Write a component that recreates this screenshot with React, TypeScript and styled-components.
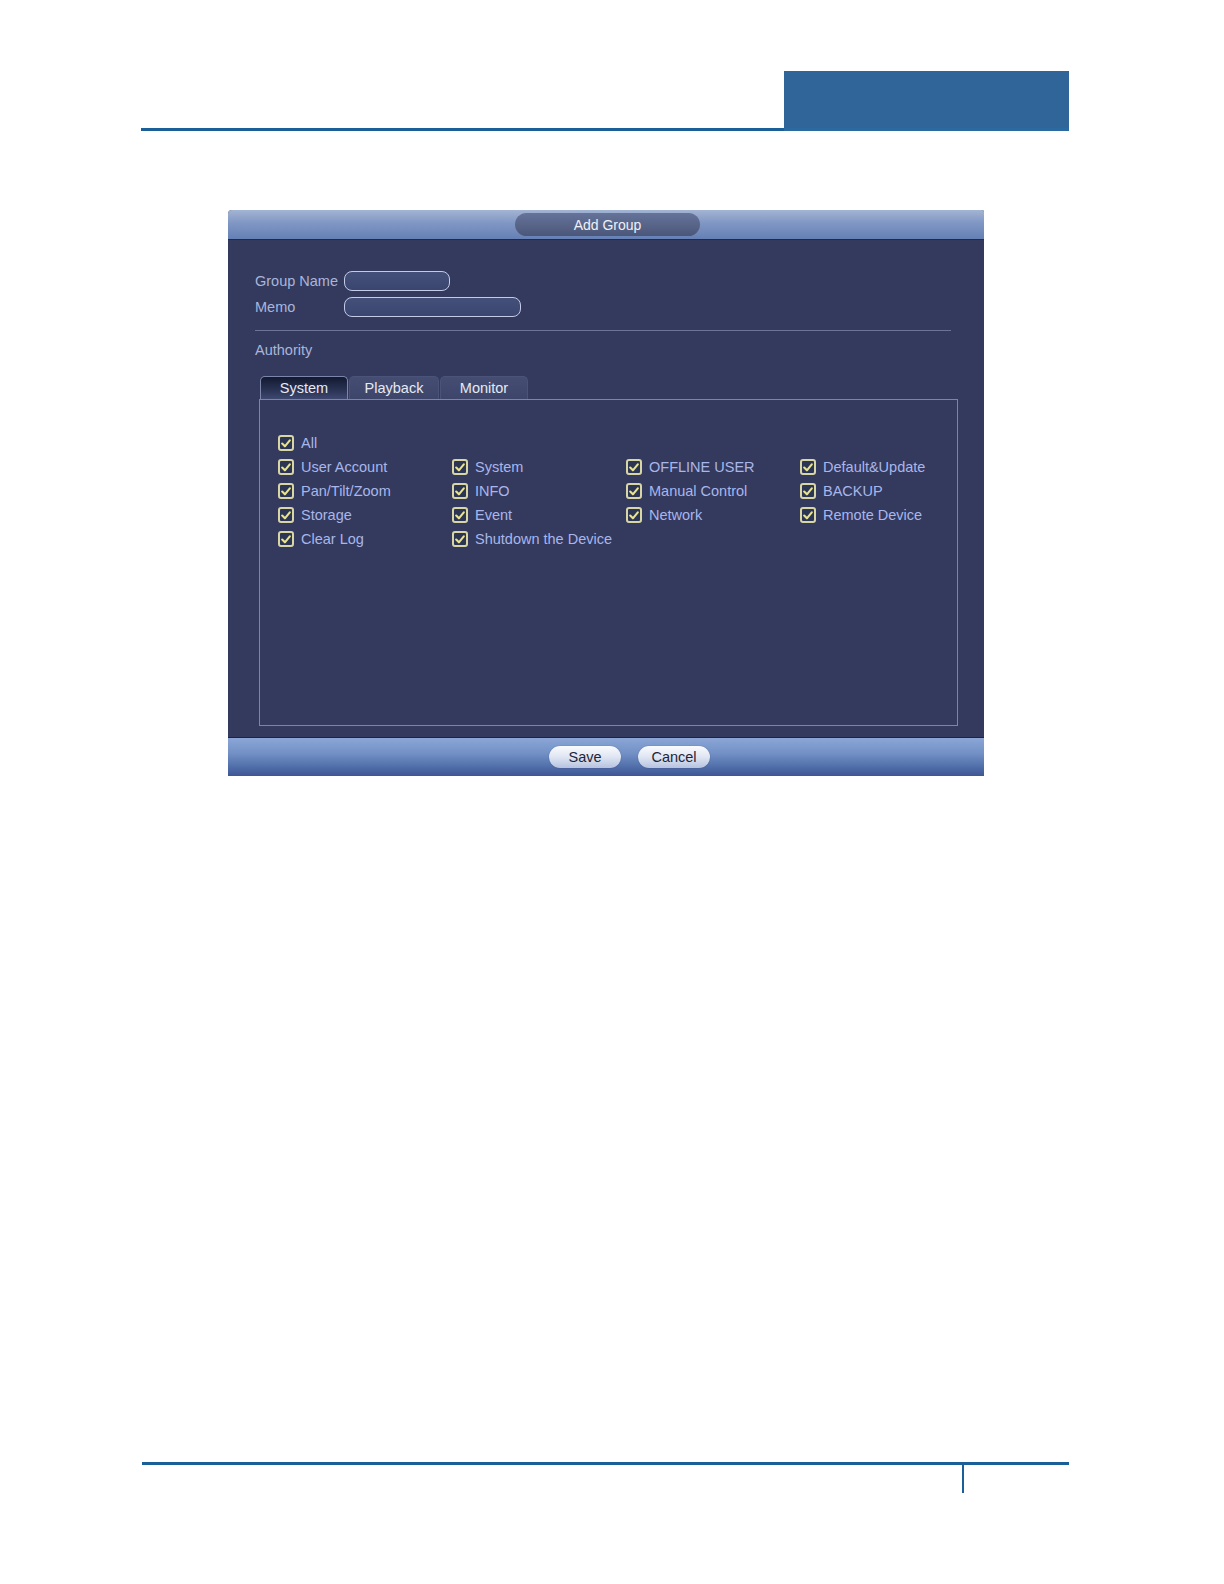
import styled, { createGlobalStyle } from "styled-components";

const GlobalStyle = createGlobalStyle`
  html, body {
    margin: 0;
    padding: 0;
    background: #ffffff;
    overflow: hidden;
  }
  body {
    font-family: "Liberation Sans", Arial, sans-serif;
  }
`;

const Page = styled.div`
  height: 1584px;
  display: flex;
  flex-direction: column;
  box-sizing: border-box;
  padding-top: 71px;
  padding-bottom: 91px;
`;

const Header = styled.div`
  margin-left: 141px;
  width: 928px;
  display: flex;
  align-items: flex-end;
`;

const HeaderLine = styled.div`
  flex: 1;
  height: 3px;
  background: #1a5f98;
`;

const HeaderBlock = styled.div`
  width: 285px;
  height: 60px;
  background: #30659a;
  border-bottom: 3px solid #2a6aa0;
  box-sizing: border-box;
`;

const Dialog = styled.div`
  margin-top: 79px;
  margin-left: 228px;
  width: 756px;
  height: 566px;
  display: flex;
  flex-direction: column;
  background: #343a5d;
  border-radius: 4px 2px 0 0;
  overflow: hidden;
`;

const TitleBar = styled.div`
  height: 30px;
  display: flex;
  justify-content: center;
  align-items: flex-start;
  padding-top: 3px;
  box-sizing: border-box;
  background: linear-gradient(#a3b4d3, #8097c4 45%, #6580b5);
  border-bottom: 1px solid #222a48;
`;

const TitlePill = styled.div`
  width: 185px;
  height: 23px;
  border-radius: 12px;
  background: linear-gradient(#66739a, #4b5779);
  color: #eef0f6;
  font-size: 14px;
  display: flex;
  align-items: center;
  justify-content: center;
  margin-left: 3px;
`;

const Body = styled.div`
  flex: 1;
  display: flex;
  flex-direction: column;
  padding: 31px 26px 10px 27px;
`;

const FieldRow = styled.div`
  display: flex;
  align-items: center;
  height: 20px;
  & + & {
    margin-top: 6px;
  }
`;

const FieldLabel = styled.div`
  width: 89px;
  color: #a9b5dc;
  font-size: 14.5px;
`;

const TextInput = styled.div<{ $width: number }>`
  width: ${(p) => p.$width}px;
  height: 20px;
  box-sizing: border-box;
  border: 1px solid #c3cbe6;
  border-radius: 8px;
  background: linear-gradient(#44507a, #3a4670);
`;

const Separator = styled.div`
  margin-top: 13px;
  margin-right: 7px;
  height: 1px;
  background: #6b7399;
`;

const SectionLabel = styled.div`
  margin-top: 11px;
  color: #a9b5dc;
  font-size: 14.5px;
  line-height: 16px;
`;

const Tabs = styled.div`
  margin-top: 18px;
  margin-left: 5px;
  display: flex;
  gap: 1px;
  height: 23px;
`;

const Tab = styled.div<{ $active?: boolean; $width: number }>`
  width: ${(p) => p.$width}px;
  box-sizing: border-box;
  display: flex;
  align-items: center;
  justify-content: center;
  font-size: 14.5px;
  color: #e6e9f4;
  border-radius: 5px 5px 0 0;
  border: 1px solid ${(p) => (p.$active ? "#7c86aa" : "#4b5478")};
  border-bottom: none;
  background: ${(p) =>
    p.$active
      ? "linear-gradient(#121a30, #2a3354 60%, #3e4870)"
      : "linear-gradient(#454e72, #3d466a)"};
`;

const Panel = styled.div`
  margin-left: 4px;
  height: 327px;
  box-sizing: border-box;
  border: 1px solid #7c84a8;
  padding: 31px 0 0 18px;
  overflow: hidden;
`;

const Grid = styled.div`
  display: grid;
  grid-template-columns: repeat(4, 174px);
  grid-auto-rows: 24px;
`;

const Item = styled.div<{ $full?: boolean }>`
  display: flex;
  align-items: center;
  gap: 7px;
  grid-column: ${(p) => (p.$full ? "1 / -1" : "auto")};
  color: #a8b6ec;
  font-size: 14.5px;
  white-space: nowrap;
`;

const Box = styled.span`
  width: 16px;
  height: 16px;
  flex: none;
  box-sizing: border-box;
  border: 2px solid #d8d5a6;
  border-radius: 3px;
  background: #2c3554;
  display: flex;
  align-items: center;
  justify-content: center;
`;

const Footer = styled.div`
  height: 39px;
  box-sizing: border-box;
  border-top: 1px solid #1d2442;
  background: linear-gradient(#8ba6d6, #7391c6 40%, #4d6aa6 80%, #3e5794);
  display: flex;
  align-items: center;
  gap: 17px;
  padding-left: 321px;
  padding-bottom: 1px;
`;

const Button = styled.div`
  width: 72px;
  height: 22px;
  border-radius: 11px;
  background: linear-gradient(#fafbfe, #dfe5f3 50%, #b6c3e0);
  color: #1e2539;
  font-size: 14.5px;
  display: flex;
  align-items: center;
  justify-content: center;
  box-shadow: 0 0 1px rgba(20, 30, 60, 0.6);
`;

const Spacer = styled.div`
  flex: 1;
`;

const Bottom = styled.div`
  margin-left: 142px;
  width: 927px;
`;

const BottomLine = styled.div`
  height: 3px;
  background: #1a5f98;
`;

const BottomTick = styled.div`
  margin-left: 820px;
  width: 2px;
  height: 28px;
  background: #1a5f98;
`;

function Check() {
  return (
    <Box>
      <svg width="10" height="9" viewBox="0 0 10 9">
        <path
          d="M1.2 4.6 L3.9 7.3 L8.8 1.4"
          fill="none"
          stroke="#e8e48e"
          strokeWidth="2.1"
          strokeLinecap="round"
          strokeLinejoin="round"
        />
      </svg>
    </Box>
  );
}

const items = [
  "User Account",
  "System",
  "OFFLINE USER",
  "Default&Update",
  "Pan/Tilt/Zoom",
  "INFO",
  "Manual Control",
  "BACKUP",
  "Storage",
  "Event",
  "Network",
  "Remote Device",
  "Clear Log",
  "Shutdown the Device",
];

export default function App() {
  return (
    <>
      <GlobalStyle />
      <Page>
        <Header>
          <HeaderLine />
          <HeaderBlock />
        </Header>
        <Dialog>
          <TitleBar>
            <TitlePill>Add Group</TitlePill>
          </TitleBar>
          <Body>
            <FieldRow>
              <FieldLabel>Group Name</FieldLabel>
              <TextInput $width={106} />
            </FieldRow>
            <FieldRow>
              <FieldLabel>Memo</FieldLabel>
              <TextInput $width={177} />
            </FieldRow>
            <Separator />
            <SectionLabel>Authority</SectionLabel>
            <Tabs>
              <Tab $active $width={88}>
                System
              </Tab>
              <Tab $width={90}>Playback</Tab>
              <Tab $width={88}>Monitor</Tab>
            </Tabs>
            <Panel>
              <Grid>
                <Item $full>
                  <Check />
                  All
                </Item>
                {items.map((name) => (
                  <Item key={name}>
                    <Check />
                    {name}
                  </Item>
                ))}
              </Grid>
            </Panel>
          </Body>
          <Footer>
            <Button>Save</Button>
            <Button>Cancel</Button>
          </Footer>
        </Dialog>
        <Spacer />
        <Bottom>
          <BottomLine />
          <BottomTick />
        </Bottom>
      </Page>
    </>
  );
}
